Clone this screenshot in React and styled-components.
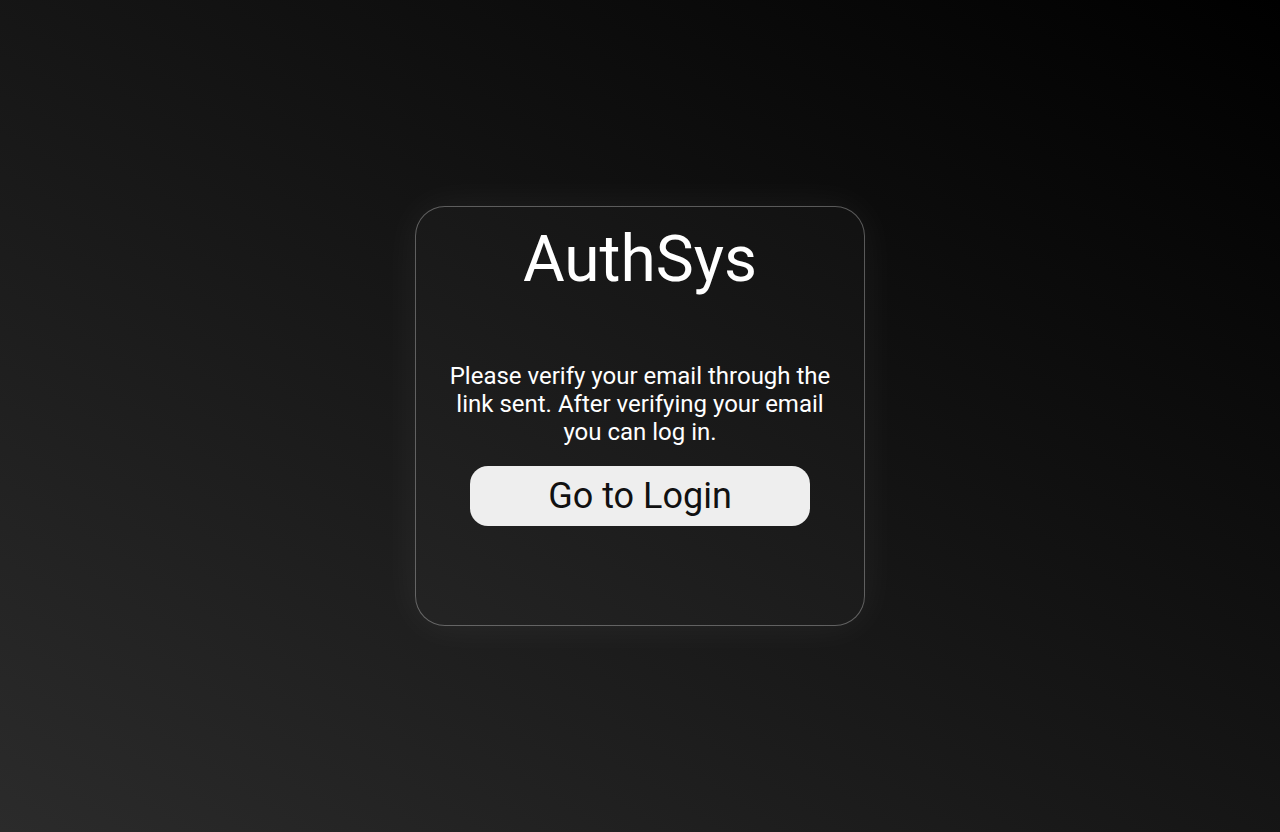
import styled, { createGlobalStyle } from "styled-components";

const GlobalStyle = createGlobalStyle`
  * {
    box-sizing: border-box;
  }
  html, body {
    margin: 0;
    padding: 0;
    height: 100%;
  }
  body {
    font-family: Roboto, "Liberation Sans", sans-serif;
    background: linear-gradient(to top right, #2b2b2b, #000000);
    color: #ffffff;
  }
  #root {
    height: 100%;
  }
`;

function App() {
  return (
    <>
      <GlobalStyle />
      <PageWrapper>
        <VerifyCard>
          <Title>AuthSys</Title>
          <Message>
            Please verify your email through the link sent. After verifying
            your email you can log in.
          </Message>
          <LoginButton type="button">Go to Login</LoginButton>
        </VerifyCard>
      </PageWrapper>
    </>
  );
}

const PageWrapper = styled.div`
  display: flex;
  align-items: center;
  justify-content: center;
  width: 100%;
  height: 100vh;
`;

const VerifyCard = styled.div`
  display: flex;
  flex-direction: column;
  align-items: center;
  width: 450px;
  height: 420px;
  padding: 15px 30px 0;
  border: 1px solid rgba(255, 255, 255, 0.3);
  border-radius: 30px;
  background: rgba(255, 255, 255, 0.025);
  box-shadow: 0 0 40px rgba(255, 255, 255, 0.06);
`;

const Title = styled.h1`
  margin: 0;
  font-size: 64px;
  font-weight: 400;
  line-height: normal;
`;

const Message = styled.p`
  margin: 65px 0 0;
  font-size: 24px;
  line-height: normal;
  text-align: center;
`;

const LoginButton = styled.button`
  width: 340px;
  height: 60px;
  margin-top: 20px;
  border: none;
  border-radius: 18px;
  background: #eeeeee;
  color: #111111;
  font-family: Roboto, "Liberation Sans", sans-serif;
  font-size: 36px;
  cursor: pointer;
`;

export default App;
